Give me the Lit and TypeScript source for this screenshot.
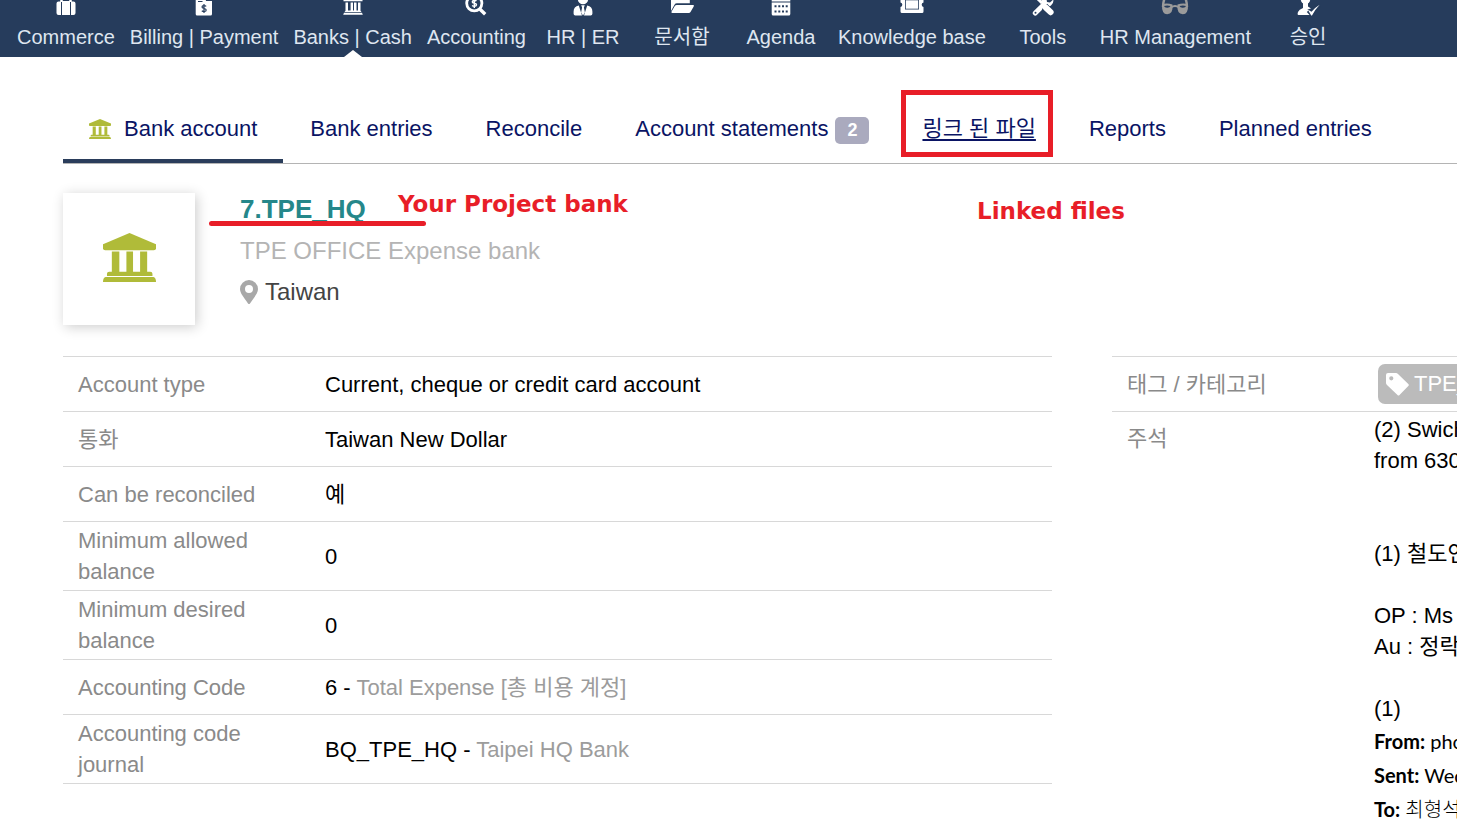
import { LitElement, html, css, svg } from "lit";
import { customElement } from "lit/decorators.js";
import { classMap } from "lit/directives/class-map.js";

const bank = svg`
  <path d="M12 0 L24 5.500 V7.500 Q24 8.500 23 8.500 H1 Q0 8.500 0 7.500 V5.500 Z"/>
  <path d="M4 9 h3.4 v10 h3.2 v-10 h3 v10 h3.2 v-10 h3.2 v10 h1.4 q1 0 1 1 v1 H1.8 v-1 q0 -1 1 -1 h1.2z"/>
  <path d="M1.2 21.6 H22.8 Q24 21.8 24 24 H0 Q0 21.8 1.2 21.6Z"/>`;

const icons = {
  suitcase: svg`
    <path d="M9.5 2 V-2.5 Q9.5 -4 11 -4 H17 Q18.500 -4 18.500 -2.500 V2" fill="none" stroke="currentColor" stroke-width="2.500"/>
    <rect x="10" y="1" width="8" height="14"/>
    <path d="M9 1.500 V15 H6.500 Q4.500 15 4.500 13 V3.500 Q4.500 1.500 6.500 1.500Z M19 1.500 V15 H21.500 Q23.500 15 23.500 13 V3.500 Q23.500 1.500 21.500 1.500Z"/>`,
  invoice: svg`
    <path d="M5.700 -8 H16 L22 -2 V14 Q22 15.500 20.500 15.500 H7.200 Q5.700 15.500 5.700 14Z"/>
    <path d="M8 1.500 H12.500 M16.500 -5 V0.500 H22" fill="none" stroke="var(--bar)" stroke-width="1.200"/>
    <path d="M16.200 6.300 C15.300 5.400 12 5.200 12 7.100 C12 9 16.200 8 16.200 10 C16.200 12 12.900 11.700 11.800 10.700 M14 4 V13" fill="none" stroke="var(--bar)" stroke-width="1.200"/>`,
  bank: svg`
    <path d="M14 -6 L23.500 -2 V1.300 H4.500 V-2Z M6.500 2.500 H9 V10.500 H11.600 V2.500 H14 V10.500 H15 V2.500 H17.500 V10.500 H19 V2.500 H21.500 V10.800 L22.500 12 H5.500 L6.500 10.800Z M5 12.700 H23 L23.800 14.700 H4.200Z"/>`,
  search: svg`
    <circle cx="12.300" cy="3.300" r="7.600" fill="none" stroke="currentColor" stroke-width="2.800"/>
    <path d="M17.500 8.800 L23.200 14.300" stroke="currentColor" stroke-width="3.400"/>
    <path d="M14.500 1.100 C13.600 0.200 10.300 0 10.300 1.900 C10.300 3.800 14.500 2.800 14.500 4.800 C14.500 6.800 11.200 6.500 10.100 5.500 M12.300 -1.400 V8" fill="none" stroke="currentColor" stroke-width="1.400"/>`,
  tie: svg`
    <circle cx="14" cy="-1" r="5.200"/>
    <path d="M9.800 5.500 L13 15.500 H6.300 Q4.600 15.500 4.600 13.700 V11.500 Q4.600 6.500 9.800 5.500Z M18.200 5.500 L15 15.500 H21.700 Q23.400 15.500 23.400 13.700 V11.500 Q23.400 6.500 18.200 5.500Z"/>
    <path d="M12.200 5.200 H15.800 L14.900 7.400 L15.900 12.500 L14 15.500 L12.100 12.500 L13.100 7.400Z"/>`,
  folder: svg`
    <path d="M3 11 V-3 Q3 -4.500 4.500 -4.500 H11 L13.500 -2 H20 Q21.800 -2 21.800 0 V3.300 H9 Q7.300 3.300 6.500 4.700Z"/>
    <path d="M8.700 5 H25 Q26.500 5 25.700 6.400 L22.500 12 Q21.900 13 20.800 13 H4.300 Q2.800 13 3.600 11.600 L6.800 6 Q7.500 5 8.700 5Z"/>`,
  calendar: svg`
    <path d="M4.700 -3 H23.300 V1.500 H4.700Z"/>
    <path fill-rule="evenodd" d="M4.700 2.600 H23.300 V14 Q23.300 15.500 21.800 15.500 H6.200 Q4.700 15.500 4.700 14Z M7.500 5.300 v2 h2 v-2z M11.300 5.300 v2 h2 v-2z M15 5.300 v2 h2 v-2z M18.700 5.300 v2 h2 v-2z M7.500 10.500 v2 h2 v-2z M11.300 10.500 v2 h2 v-2z M15 10.500 v2 h2 v-2z M18.700 10.500 v2 h2 v-2z"/>`,
  ticket: svg`
    <path fill-rule="evenodd" d="M4 -4.500 H24 Q25.500 -4.500 25.500 -3 V2.500 A2.300 2.300 0 0 0 25.500 7 V11.500 Q25.500 13 24 13 H4 Q2.500 13 2.500 11.500 V7 A2.300 2.300 0 0 0 2.500 2.500 V-3 Q2.500 -4.500 4 -4.500Z M7 -0.500 V9.500 H21 V-0.500Z"/>
    <rect x="7.800" y="0.300" width="12.400" height="8.400"/>`,
  tools: svg`
    <path d="M6.300 13 L15.500 4" stroke="currentColor" stroke-width="5" stroke-linecap="round"/>
    <path d="M13 6.500 Q11 0 15 -3 Q18 -5.500 21 -4.500 L17.500 -1 L18 2 L21 2.500 L24.300 -0.500 Q25 3 22 5.500 Q19 8 15 6.500Z"/>
    <path d="M5 -5 L13 3" stroke="currentColor" stroke-width="3"/>
    <path d="M15.500 6.500 L21.500 12.500" stroke="var(--bar)" stroke-width="7.500"/>
    <path d="M16.700 7.500 L21.600 12.200" stroke="currentColor" stroke-width="6" stroke-linecap="round"/>
    <circle cx="6.500" cy="12.800" r="1" fill="var(--bar)"/>`,
  glasses: svg`
    <path d="M2 7 Q2 0 5.500 -5 M26 7 Q26 0 22.500 -5" fill="none" stroke="currentColor" stroke-width="2.400"/>
    <path d="M10 7.500 Q14 4.500 18 7.500" fill="none" stroke="currentColor" stroke-width="2"/>
    <path d="M1 4.200 Q6 2.800 11.500 4.500 Q12.300 14.200 6.200 14.200 Q0.500 14.200 1 4.200Z M27 4.200 Q22 2.800 16.500 4.500 Q15.700 14.200 21.800 14.200 Q27.500 14.200 27 4.200Z"/>
    <path d="M3 6 Q6 5 9.500 6 Q8.800 8 6 7.800 Q3.500 7.700 3 6Z M18.500 6 Q22 5 25 6 Q24.500 7.700 22 7.800 Q19.200 8 18.500 6Z" fill="var(--bar)"/>`,
  check: svg`
    <ellipse cx="11.500" cy="-1.500" rx="4.800" ry="6"/>
    <path d="M9 3 H14 V6.500 L17 8.500 L13.500 9.500 L17 15 H4.500 Q3 15 4 12 Q5 9.500 9 8Z"/>
    <path d="M14.500 10.500 L17.500 13.800 Q20 9 25 5.500" fill="none" stroke="var(--bar)" stroke-width="4.500"/>
    <path d="M13.700 9.500 L17.500 11.800 Q20 8.200 25.700 4.700 Q21 9.500 18 15.500 H17.200Z"/>`,
};

const menu = [
  { label: "Commerce", icon: icons.suitcase },
  { label: "Billing | Payment", icon: icons.invoice },
  { label: "Banks | Cash", icon: icons.bank, current: true },
  { label: "Accounting", icon: icons.search },
  { label: "HR | ER", icon: icons.tie },
  { label: "문서함", icon: icons.folder },
  { label: "Agenda", icon: icons.calendar },
  { label: "Knowledge base", icon: icons.ticket },
  { label: "Tools", icon: icons.tools },
  { label: "HR Management", icon: icons.glasses, muted: true },
  { label: "승인", icon: icons.check },
];

const tabs = [
  { label: "Bank account", icon: true, active: true },
  { label: "Bank entries" },
  { label: "Reconcile" },
  { label: "Account statements", badge: "2" },
  { label: "링크 된 파일", marked: true },
  { label: "Reports" },
  { label: "Planned entries" },
];

const rows = [
  { label: "Account type", value: "Current, cheque or credit card account" },
  { label: "통화", value: "Taiwan New Dollar" },
  { label: "Can be reconciled", value: "예" },
  { label: "Minimum allowed balance", value: "0" },
  { label: "Minimum desired balance", value: "0" },
  { label: "Accounting Code", value: "6 - ", note: "Total Expense [총 비용 계정]" },
  { label: "Accounting code journal", value: "BQ_TPE_HQ - ", note: "Taipei HQ Bank" },
];

@customElement("top-menu")
export class TopMenu extends LitElement {
  static styles = css`
    :host {
      --bar: #263c5c;
      display: block;
      background: var(--bar);
      overflow: hidden;
    }
    .menu {
      display: flex;
      align-items: flex-end;
      gap: 1px;
      height: 57px;
      padding: 0 10px;
    }
    .item {
      box-sizing: border-box;
      display: flex;
      flex: none;
      flex-direction: column;
      align-items: center;
      position: relative;
      min-width: 98px;
      height: 65px;
      padding: 0 7px;
      color: #dfe6f0;
      font-size: 20px;
      line-height: 43px;
      white-space: nowrap;
      text-decoration: none;
    }
    .icon {
      flex: none;
      width: 28px;
      height: 24px;
      color: #fff;
      fill: currentColor;
    }
    .muted .icon {
      color: #9b9b9b;
    }
    .current::after {
      content: "";
      position: absolute;
      bottom: 0;
      border: solid transparent;
      border-width: 0 9px 7px;
      border-bottom-color: #fff;
    }
  `;

  render() {
    return html`<nav class="menu">
      ${menu.map(
        (m) => html`<a href="#" class=${classMap({ item: true, current: !!m.current, muted: !!m.muted })}>
          <svg class="icon" viewBox="0 -8 28 24" aria-hidden="true">${m.icon}</svg>
          <span>${m.label}</span>
        </a>`
      )}
    </nav>`;
  }
}

@customElement("account-tabs")
export class AccountTabs extends LitElement {
  static styles = css`
    :host {
      display: block;
    }
    .tabs {
      display: flex;
      gap: 1px;
      border-bottom: 1px solid #b4b4b4;
    }
    .tab {
      display: flex;
      flex: none;
      align-items: center;
      position: relative;
      padding: 15px 26px 12px;
      border-bottom: 4px solid transparent;
      color: #0a1464;
      font-size: 22px;
      line-height: 36px;
      text-decoration: none;
      white-space: nowrap;
    }
    .active {
      border-bottom-color: #2a3d5b;
      border-radius: 2px 2px 0 0;
    }
    .icon {
      width: 22px;
      height: 20px;
      margin-right: 13px;
      fill: #b0bb39;
    }
    .badge {
      margin: 2px 0 0 7px;
      padding: 0 12px;
      border-radius: 5px;
      background: #aaaabe;
      color: #fff;
      font-size: 18px;
      font-weight: 700;
      line-height: 27px;
    }
    .marked span {
      text-decoration: underline;
      text-decoration-thickness: 2px;
      text-underline-offset: 3px;
    }
    .marked::after {
      content: "";
      position: absolute;
      inset: -6px 9px 2px 5px;
      border: 5px solid #e81e28;
    }
  `;

  render() {
    return html`<nav class="tabs">
      ${tabs.map(
        (t) => html`<a href="#" class=${classMap({ tab: true, active: !!t.active, marked: !!t.marked })}>
          ${t.icon ? html`<svg class="icon" viewBox="0 0 24 24" preserveAspectRatio="none" aria-hidden="true">${bank}</svg>` : ""}
          <span>${t.label}</span>${t.badge ? html`<b class="badge">${t.badge}</b>` : ""}
        </a>`
      )}
    </nav>`;
  }
}

@customElement("app-root")
export class AppRoot extends LitElement {
  static styles = css`
    :host {
      display: block;
      overflow: hidden;
      background: #fff;
      color: #000;
      font-family: "Liberation Sans", "Noto Sans CJK KR", sans-serif;
      font-size: 22px;
      line-height: 31px;
    }
    .page {
      padding: 39px 0 0 63px;
    }
    .hero {
      display: flex;
      gap: 45px;
      position: relative;
      margin: 29px 0 31px;
    }
    .photo {
      box-sizing: border-box;
      display: grid;
      place-items: center;
      width: 132px;
      height: 132px;
      padding-bottom: 4px;
      box-shadow: 2px 2px 12px rgba(0, 0, 0, 0.2);
    }
    .bank {
      width: 53px;
      height: 49px;
      fill: #b0bb39;
    }
    .title {
      margin: 0 0 5px;
      color: #25878a;
      font-size: 26px;
      line-height: 32px;
    }
    .sub,
    .place {
      margin: 0;
      font-size: 24px;
      line-height: 41px;
    }
    .sub {
      color: #b4b4b4;
    }
    .place {
      display: flex;
      align-items: center;
      gap: 7px;
      color: #444;
    }
    .pin {
      width: 18px;
      height: 24px;
      fill: #a8a8a8;
    }
    .mark {
      position: absolute;
      color: #e81e28;
      font-family: "DejaVu Sans", sans-serif;
      font-size: 23px;
      font-weight: 700;
      line-height: 30px;
      white-space: nowrap;
    }
    .mark-bank {
      left: 335px;
      top: -4px;
    }
    .mark-files {
      left: 914px;
      top: 3px;
    }
    .stroke {
      position: absolute;
      left: 146px;
      top: 28px;
      width: 217px;
      height: 5px;
      border-radius: 3px;
      background: #e81e28;
    }
    .columns {
      display: grid;
      grid-template-columns: minmax(0, 1fr) 345px;
      gap: 60px;
      align-items: start;
    }
    .fields {
      width: 100%;
      border-collapse: collapse;
      table-layout: fixed;
      border-top: 1px solid #d8d8d8;
    }
    .fields th,
    .fields td {
      height: 48px;
      padding: 3px 15px;
      text-align: left;
      font-weight: 400;
    }
    .fields tr {
      border-bottom: 1px solid #d8d8d8;
    }
    .fields th {
      width: 217px;
      color: #8a8a8a;
    }
    .note {
      color: #9c9c9c;
    }
    .side {
      overflow: hidden;
    }
    .side tr:last-child {
      border-bottom: 0;
    }
    .side td {
      padding-top: 2px;
      white-space: nowrap;
    }
    .side .top {
      padding-top: 11px;
      vertical-align: top;
    }
    .tag {
      display: inline-flex;
      align-items: center;
      gap: 5px;
      margin: 1px 0 0 4px;
      padding: 0 8px;
      border-radius: 7px;
      background: #bbb;
      color: #fff;
      line-height: 40px;
      text-decoration: none;
      vertical-align: top;
    }
    .tag-icon {
      width: 23px;
      height: 23px;
      fill: #fff;
    }
    .text {
      margin: 0;
      white-space: pre;
    }
    .mail {
      font-family: Lato, "Noto Sans CJK KR", sans-serif;
      font-size: 20px;
      font-weight: 400;
      line-height: 34px;
    }
    .thin {
      font-weight: 300;
    }
  `;

  render() {
    return html`
      <top-menu></top-menu>
      <main class="page">
        <account-tabs></account-tabs>
        <header class="hero">
          <div class="photo">
            <svg class="bank" viewBox="0 0 24 24" preserveAspectRatio="none" aria-hidden="true">${bank}</svg>
          </div>
          <div>
            <h1 class="title">7.TPE_HQ</h1>
            <p class="sub">TPE OFFICE Expense bank</p>
            <p class="place">
              <svg class="pin" viewBox="0 0 18 24" aria-hidden="true">
                <path fill-rule="evenodd" d="M9 0 A9 9 0 0 1 18 9 C18 13 14.500 17 10 23.400 Q9 24.500 8 23.400 C3.500 17 0 13 0 9 A9 9 0 0 1 9 0Z M9 5 A4 4 0 1 0 9 13 A4 4 0 1 0 9 5Z"/>
              </svg>
              Taiwan
            </p>
          </div>
          <div class="stroke"></div>
          <div class="mark mark-bank">Your Project bank</div>
          <div class="mark mark-files">Linked files</div>
        </header>
        <div class="columns">
          <table class="fields">
            ${rows.map(
              (r) => html`<tr>
                <th scope="row">${r.label}</th>
                <td>${r.value}${r.note ? html`<span class="note">${r.note}</span>` : ""}</td>
              </tr>`
            )}
          </table>
          <div class="side">
            <table class="fields">
              <tr>
                <th scope="row">태그 / 카테고리</th>
                <td>
                  <a class="tag" href="#"><svg class="tag-icon" viewBox="0 0 23 23" aria-hidden="true">
                    <path fill-rule="evenodd" d="M2 0 H10 Q11 0 12 1 L22.300 11 Q23.300 12 22.300 13 L13.500 22 Q12.500 23 11.500 22 L1 12 Q0 11 0 10 V2 Q0 0 2 0Z M5.300 3.200 A2.100 2.100 0 1 0 5.300 7.400 A2.100 2.100 0 1 0 5.300 3.200Z"/>
                  </svg>TPE_HQ</a>
                </td>
              </tr>
              <tr>
                <th class="top" scope="row">주석</th>
                <td>
                  <p class="text">(2) Swich
from 630


(1) 철도연

OP : Ms
Au : 정락

(1)</p>
                  <p class="text mail"><b>From:</b> pho
<b>Sent:</b> Wed
<b>To:</b> <span class="thin">최형석</span></p>
                </td>
              </tr>
            </table>
          </div>
        </div>
      </main>
    `;
  }
}
